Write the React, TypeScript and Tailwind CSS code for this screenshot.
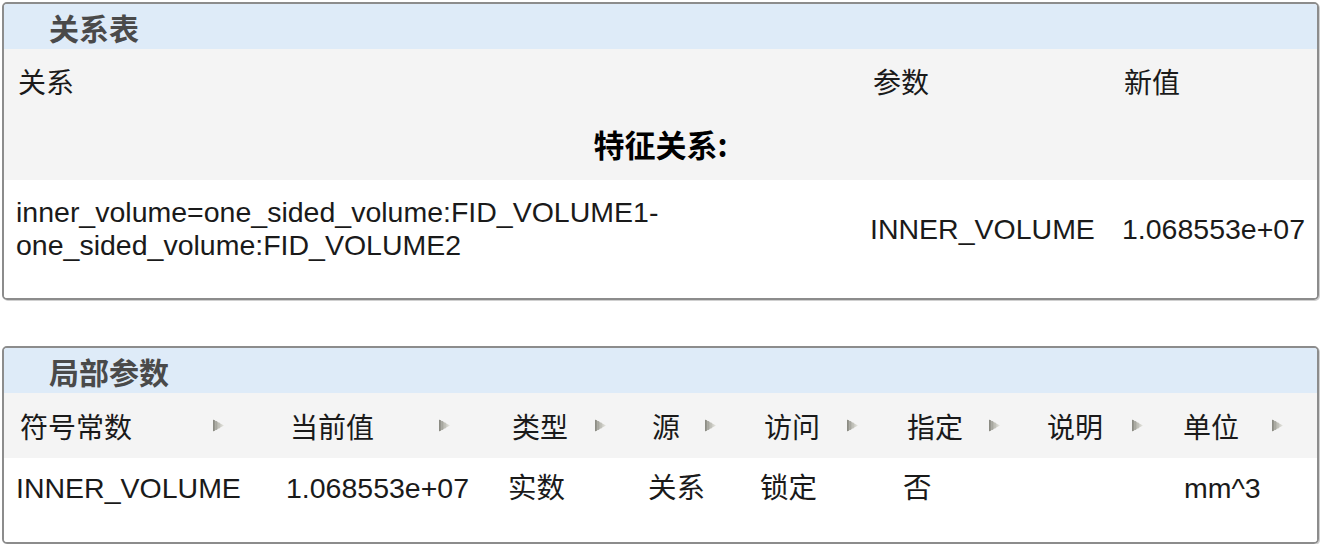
import React from 'react';

const latin = "font-['Liberation_Sans','Noto_Sans_CJK_SC',sans-serif]";

const SortIcon: React.FC<{ className?: string }> = ({ className }) => (
  <svg width="13" height="13" viewBox="0 0 13 13" className={className}>
    <defs>
      <linearGradient id="sortg" x1="0" y1="0" x2="1" y2="0">
        <stop offset="0" stopColor="#9a9a92" />
        <stop offset="1" stopColor="#e6e6e0" />
      </linearGradient>
    </defs>
    <polygon points="1,0.5 12,6.5 1,12.5" fill="url(#sortg)" />
    <rect x="1" y="1" width="1.6" height="11" fill="#8c8c84" />
    <rect x="4" y="2.2" width="1.2" height="8.6" fill="#a8a8a0" />
    <rect x="6.5" y="3.6" width="1" height="5.8" fill="#bdbdb6" />
  </svg>
);

const TitleBar: React.FC<{ title: string }> = ({ title }) => (
  <div className="h-[45px] bg-[#deebf8] flex items-center pl-[45px]">
    <span className="text-[30px] font-bold text-[#4a4a4a] font-['Noto_Sans_CJK_SC',sans-serif] leading-none">{title}</span>
  </div>
);

interface Col {
  label: string;
  iconGap: string;
}

const cols: Col[] = [
  { label: '符号常数', iconGap: 'ml-[80px]' },
  { label: '当前值', iconGap: 'ml-[64px]' },
  { label: '类型', iconGap: 'ml-[26px]' },
  { label: '源', iconGap: 'ml-[24px]' },
  { label: '访问', iconGap: 'ml-[26px]' },
  { label: '指定', iconGap: 'ml-[25px]' },
  { label: '说明', iconGap: 'ml-[28px]' },
  { label: '单位', iconGap: 'ml-[32px]' },
];

const values = ['INNER_VOLUME', '1.068553e+07', '实数', '关系', '锁定', '否', '', 'mm^3'];

const grid2 = 'grid grid-cols-[270px_222px_140px_112px_143px_140px_136px_1fr]';

export default function App() {
  return (
    <div className={`px-[2px] pt-[2px] bg-white text-[#1a1a1a] ${latin}`}>
      {/* 关系表 */}
      <div className="border-2 border-[#8c8c8c] rounded-[5px] overflow-hidden shadow-[1px_1px_0_#d0d0d0]">
        <TitleBar title="关系表" />
        <div className="bg-[#f4f4f4]">
          <div className="grid grid-cols-[855px_251px_1fr] h-[63px] items-center text-[28px] font-['Noto_Sans_CJK_SC',sans-serif]">
            <div className="pl-[14px]">关系</div>
            <div className="pl-[14px]">参数</div>
            <div className="pl-[14px]">新值</div>
          </div>
          <div className="h-[68px] flex items-center justify-center pb-[6px]">
            <span className="text-[31px] font-bold text-black font-['Noto_Sans_CJK_SC',sans-serif] leading-none">特征关系:</span>
          </div>
        </div>
        <div className="bg-white grid grid-cols-[855px_251px_1fr] h-[118px] items-center pb-[20px] text-[28.5px] leading-[33px]">
          <div className="pl-[12px]">
            inner_volume=one_sided_volume:FID_VOLUME1-
            <br />
            one_sided_volume:FID_VOLUME2
          </div>
          <div className="pl-[11px]">INNER_VOLUME</div>
          <div className="pl-[12px]">1.068553e+07</div>
        </div>
      </div>

      {/* 局部参数 */}
      <div className="mt-[46px] border-2 border-[#8c8c8c] rounded-[5px] overflow-hidden shadow-[1px_1px_0_#d0d0d0]">
        <TitleBar title="局部参数" />
        <div className={`${grid2} bg-[#f4f4f4] h-[65px] items-center text-[28px] font-['Noto_Sans_CJK_SC',sans-serif]`}>
          {cols.map((c) => (
            <div key={c.label} className="pl-[16px] flex items-center">
              <span className="leading-none">{c.label}</span>
              <SortIcon className={c.iconGap} />
            </div>
          ))}
        </div>
        <div className={`${grid2} bg-white h-[84px] items-center pb-[24px] text-[28.5px]`}>
          {values.map((v, i) => (
            <div key={i} className={i === 7 ? 'pl-[17px]' : 'pl-[12px]'}>
              {v}
            </div>
          ))}
        </div>
      </div>
    </div>
  );
}
